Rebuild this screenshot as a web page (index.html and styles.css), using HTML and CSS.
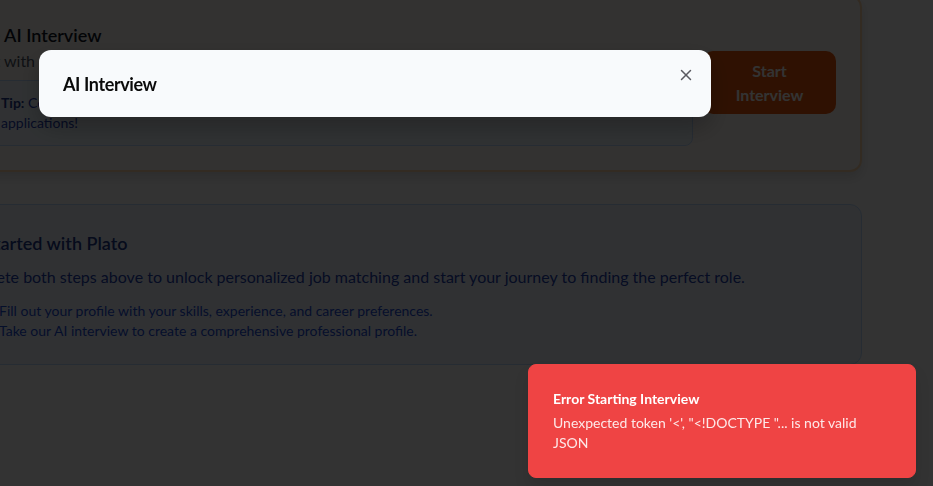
FILE: index.html
```html
<!DOCTYPE html>
<html lang="en">
<head>
<meta charset="utf-8">
<title>Plato – AI Interview</title>
<link rel="stylesheet" href="styles.css">
</head>
<body>
<main class="page">
  <section class="card card-interview">
    <div class="interview-row">
      <div class="interview-info">
        <h2 class="card-title">Take AI Interview</h2>
        <p class="card-desc">Chat with conversational AI to build your professional profile</p>
        <div class="tip">
          <svg class="tip-icon" viewBox="0 0 24 24" width="16" height="16" fill="none" stroke="currentColor" stroke-width="2" stroke-linecap="round" stroke-linejoin="round"><path d="M15 14c.2-1 .7-1.7 1.5-2.5 1-.9 1.5-2.2 1.5-3.5A6 6 0 0 0 6 8c0 1 .2 2.2 1.5 3.5.7.7 1.3 1.5 1.5 2.5"/><path d="M9 18h6"/><path d="M10 22h4"/></svg>
          <p class="tip-text"><strong>Tip:</strong> Complete your AI interview in a quiet space and answer honestly to build a profile that stands out in your applications!</p>
        </div>
      </div>
      <button class="btn-start" type="button">Start Interview</button>
    </div>
  </section>

  <section class="card card-start">
    <h3 class="start-title">Get Started with Plato</h3>
    <p class="start-text">Complete both steps above to unlock personalized job matching and start your journey to finding the perfect role.</p>
    <ol class="start-list">
      <li>Fill out your profile with your skills, experience, and career preferences.</li>
      <li>Take our AI interview to create a comprehensive professional profile.</li>
    </ol>
  </section>
</main>

<div class="overlay"></div>

<div class="dialog" role="dialog" aria-labelledby="dialog-title">
  <h2 class="dialog-title" id="dialog-title">AI Interview</h2>
  <button class="dialog-close" type="button" aria-label="Close">
    <svg viewBox="0 0 24 24" width="18" height="18" fill="none" stroke="currentColor" stroke-width="2" stroke-linecap="round" stroke-linejoin="round"><path d="M18 6 6 18"/><path d="m6 6 12 12"/></svg>
  </button>
</div>

<ol class="toast-viewport">
  <li class="toast">
    <div class="toast-title">Error Starting Interview</div>
    <div class="toast-desc">Unexpected token '&lt;', "&lt;!DOCTYPE "... is not valid JSON</div>
  </li>
</ol>
</body>
</html>
```
FILE: styles.css
```css
* { box-sizing: border-box; }

html, body {
  margin: 0;
  height: 100%;
  overflow: hidden;
  background: #ffffff;
  font-family: "Lato", "Roboto", "Liberation Sans", sans-serif;
  color: #111827;
}

h2, h3, p, ol { margin: 0; }

/* ---------- page behind the modal ---------- */
.page {
  width: 924px;
  margin: -5px 0 0 -62px;
  display: flex;
  flex-direction: column;
  gap: 32px;
}

.card {
  border-radius: 12px;
}

.card-interview {
  background: #fffaf5;
  border: 2px solid #fed7aa;
  padding: 24px;
  box-shadow: 0 6px 12px rgba(0, 0, 0, 0.12);
}

.interview-row {
  display: flex;
  align-items: center;
  gap: 10px;
}

.interview-info {
  flex: 1;
  min-width: 0;
}

.card-title {
  font-size: 18px;
  line-height: 28px;
  font-weight: 600;
  color: #111827;
}

.card-desc {
  font-size: 16px;
  line-height: 24px;
  color: #4b5563;
  padding-left: 3px;
}

.tip {
  margin-top: 7px;
  display: flex;
  align-items: flex-start;
  gap: 8px;
  padding: 12px;
  background: #eff6ff;
  border: 1px solid #bfdbfe;
  border-radius: 8px;
}

.tip-icon {
  flex-shrink: 0;
  margin-top: 2px;
  color: #2563eb;
}

.tip-text {
  font-size: 14px;
  line-height: 20px;
  color: #1e40af;
}

.tip-text strong {
  color: #1e3a8a;
  font-weight: 700;
}

.btn-start {
  flex-shrink: 0;
  width: 133px;
  margin-top: -2px;
  padding: 7.5px 20px;
  border: 0;
  border-radius: 10px;
  background: #ea580c;
  color: #ffffff;
  font-family: inherit;
  font-size: 16px;
  line-height: 24px;
  font-weight: 700;
  text-align: center;
}

.card-start {
  background: #eff6ff;
  border: 1px solid #bfdbfe;
  padding: 24px 24px 24px 12px;
}

.start-title {
  font-size: 18px;
  line-height: 28px;
  font-weight: 600;
  color: #1e3a8a;
  margin-bottom: 8px;
}

.start-text {
  font-size: 16px;
  line-height: 24px;
  color: #1e40af;
}

.start-list {
  margin-top: 12px;
  padding-left: 48px;
  font-size: 14px;
  line-height: 19.5px;
  color: #1d4ed8;
}

/* ---------- overlay & dialog ---------- */
.overlay {
  position: fixed;
  inset: 0;
  background: rgba(0, 0, 0, 0.8);
  z-index: 50;
}

.dialog {
  position: fixed;
  left: 39px;
  top: 50px;
  width: 672px;
  padding: 25px 24px 23px;
  background: #f8fafc;
  border-radius: 12px;
  box-shadow: 0 10px 25px rgba(0, 0, 0, 0.25);
  z-index: 51;
}

.dialog-title {
  font-size: 18px;
  line-height: 19px;
  font-weight: 700;
  letter-spacing: -0.4px;
  color: #0a0a0a;
}

.dialog-close {
  position: absolute;
  top: 16px;
  right: 16px;
  width: 18px;
  height: 18px;
  padding: 0;
  border: 0;
  background: none;
  color: #3f3f46;
  opacity: 0.85;
  display: flex;
}

/* ---------- toast ---------- */
.toast-viewport {
  position: fixed;
  right: 17px;
  bottom: 8px;
  list-style: none;
  padding: 0;
  margin: 0;
  z-index: 100;
}

.toast {
  width: 388px;
  padding: 24px 32px 24px 24px;
  background: #ef4444;
  border: 1px solid #ef4444;
  border-radius: 8px;
  color: #ffffff;
  display: grid;
  gap: 4px;
  box-shadow: 0 10px 15px rgba(0, 0, 0, 0.1);
}

.toast-title {
  font-size: 14px;
  line-height: 20px;
  font-weight: 700;
}

.toast-desc {
  font-size: 14px;
  line-height: 20px;
  color: #fde8e8;
}
```
